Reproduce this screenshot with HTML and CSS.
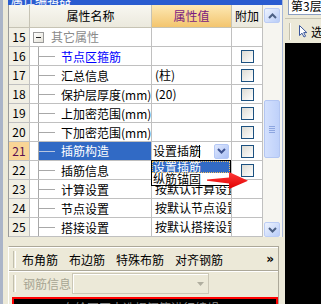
FILE: index.html
```html
<!DOCTYPE html>
<html lang="zh">
<head>
    <meta charset="UTF-8">
    <title>属性编辑器</title>
    <link rel="stylesheet" href="styles.css">
</head>
<body>

<div class="screen">
    <div class="left">
        <div class="frame-edge"></div>
        <div class="main">
            <div class="titlebar"><span>属性编辑器</span></div>

            <div class="grid-area">
                <div class="grid-wrap">
                    <div class="row hdr">
                        <div class="c num"></div>
                        <div class="c name">属性名称</div>
                        <div class="c val">属性值</div>
                        <div class="c att">附加</div>
                    </div>

                    <div class="row">
                        <div class="c num">15</div>
                        <div class="c name group"><span class="expander"><i></i></span><span class="grey">其它属性</span></div>
                        <div class="c val"></div>
                        <div class="c att"></div>
                    </div>
                    <div class="row">
                        <div class="c num">16</div>
                        <div class="c name"><span class="node"><b class="branch"></b><span class="blue">节点区箍筋</span></span></div>
                        <div class="c val"></div>
                        <div class="c att"><span class="chk"></span></div>
                    </div>
                    <div class="row">
                        <div class="c num">17</div>
                        <div class="c name"><span class="node"><b class="branch"></b>汇总信息</span></div>
                        <div class="c val">(柱)</div>
                        <div class="c att"><span class="chk"></span></div>
                    </div>
                    <div class="row">
                        <div class="c num">18</div>
                        <div class="c name"><span class="node"><b class="branch"></b>保护层厚度(mm)</span></div>
                        <div class="c val">(20)</div>
                        <div class="c att"><span class="chk"></span></div>
                    </div>
                    <div class="row">
                        <div class="c num">19</div>
                        <div class="c name"><span class="node"><b class="branch"></b>上加密范围(mm)</span></div>
                        <div class="c val"></div>
                        <div class="c att"><span class="chk"></span></div>
                    </div>
                    <div class="row">
                        <div class="c num">20</div>
                        <div class="c name"><span class="node"><b class="branch"></b>下加密范围(mm)</span></div>
                        <div class="c val"></div>
                        <div class="c att"><span class="chk"></span></div>
                    </div>
                    <div class="row current">
                        <div class="c num">21</div>
                        <div class="c name"><span class="node"><b class="branch"></b>插筋构造</span></div>
                        <div class="c val edit">设置插筋<span class="caret"></span>
                            <span class="combo-btn">
                                <svg width="9" height="6" viewBox="0 0 9 6"><path d="M1 1 L4.5 4.5 L8 1" fill="none" stroke="#3d5290" stroke-width="2"/></svg>
                            </span>
                        </div>
                        <div class="c att"><span class="chk"></span></div>
                    </div>
                    <div class="row">
                        <div class="c num">22</div>
                        <div class="c name"><span class="node"><b class="branch"></b>插筋信息</span></div>
                        <div class="c val"></div>
                        <div class="c att"><span class="chk"></span></div>
                    </div>
                    <div class="row">
                        <div class="c num">23</div>
                        <div class="c name"><span class="node"><b class="branch"></b>计算设置</span></div>
                        <div class="c val">按默认计算设置</div>
                        <div class="c att"></div>
                    </div>
                    <div class="row">
                        <div class="c num">24</div>
                        <div class="c name"><span class="node"><b class="branch"></b>节点设置</span></div>
                        <div class="c val">按默认节点设置</div>
                        <div class="c att"></div>
                    </div>
                    <div class="row">
                        <div class="c num">25</div>
                        <div class="c name"><span class="node"><b class="branch"></b>搭接设置</span></div>
                        <div class="c val">按默认搭接设置</div>
                        <div class="c att"></div>
                    </div>

                    <!-- open dropdown of row 21 -->
                    <div class="droplist">
                        <div class="opt sel">设置插筋</div>
                        <div class="opt">纵筋锚固</div>
                    </div>

                    <svg class="pointer-arrow" width="44" height="22" viewBox="0 0 44 22">
                        <defs>
                            <linearGradient id="ar" x1="0" y1="0" x2="0" y2="1">
                                <stop offset="0" stop-color="#ff3a3a"/>
                                <stop offset="1" stop-color="#e00000"/>
                            </linearGradient>
                        </defs>
                        <polygon points="1,9.6 23,7.4 23,2 42,10.8 23,19 23,13.6 1,10.8" fill="url(#ar)"/>
                    </svg>
                </div>

                <div class="vscroll">
                    <div class="sb-btn up">
                        <svg width="9" height="6" viewBox="0 0 9 6"><path d="M1 5 L4.5 1.5 L8 5" fill="none" stroke="#4d6185" stroke-width="2"/></svg>
                    </div>
                    <div class="sb-thumb"><i></i><i></i><i></i><i></i></div>
                    <div class="sb-btn down">
                        <svg width="9" height="6" viewBox="0 0 9 6"><path d="M1 1 L4.5 4.5 L8 1" fill="none" stroke="#4d6185" stroke-width="2"/></svg>
                    </div>
                </div>
            </div>

            <div class="bottom">
                <div class="panel">
                    <div class="tb tb1">
                        <span class="gripper"></span>
                        <span class="tbtn">布角筋</span>
                        <span class="tbtn">布边筋</span>
                        <span class="tbtn">特殊布筋</span>
                        <span class="tbtn">对齐钢筋</span>
                        <span class="more">»</span>
                    </div>
                    <div class="tb tb2">
                        <span class="gripper"></span>
                        <span class="tlabel">钢筋信息</span>
                        <span class="tcombo">
                            <svg width="7" height="4" viewBox="0 0 7 4"><path d="M0 0 H7 L3.5 4 Z" fill="#b0ae9f"/></svg>
                        </span>
                    </div>
                    <div class="canvas"><span>在绘图区中选择钢筋进行编辑</span></div>
                </div>
            </div>
        </div>
        <div class="sep"><div class="sep-top"></div></div>
    </div>

    <div class="right">
        <div class="floor">第3层</div>
        <div class="tools">
            <span class="gripper"></span>
            <svg class="cursor" width="9" height="13" viewBox="0 0 9 13">
                <path d="M0.5 0.5 L0.5 10.5 L3 8.2 L5 12 L6.6 11.2 L4.7 7.6 L7.8 7.6 Z" fill="#fff" stroke="#39569c" stroke-width="1"/>
            </svg>
            <span class="tool-text">选择</span>
        </div>
        <div class="black"></div>
    </div>
</div>

</body>
</html>
```

FILE: styles.css
```css
body {
    margin: 0;
    background: #000;
    font-family: "Noto Sans CJK SC", "Liberation Sans", sans-serif;
    font-size: 12px;
    color: #000;
}
.screen {
    display: flex;
    width: 321px;
    height: 304px;
    overflow: hidden;
}
.left {
    display: flex;
    width: 285px;
    background: #ece9d8;
}
.frame-edge {
    width: 3px;
    margin-right: 5px;
    background: #aab4c8;
}
.main {
    width: 274px;
    display: flex;
    flex-direction: column;
}
.titlebar {
    height: 5px;
    overflow: hidden;
    background: #2a5cd0;
    color: #fff;
    line-height: 12px;
}
.titlebar span {
    display: block;
    margin-top: -7px;
    padding-left: 3px;
}

/* property grid */
.grid-area {
    display: flex;
    height: 232px;
}
.grid-wrap {
    position: relative;
    width: 255px;
    border-left: 1px solid #9a9a9a;
    box-sizing: border-box;
    background: #fff;
}
.row {
    display: flex;
    height: 19px;
}
.c {
    box-sizing: border-box;
    border-right: 1px solid #c0c0c0;
    border-bottom: 1px solid #c0c0c0;
    line-height: 18px;
    white-space: nowrap;
    overflow: hidden;
}
.num {
    width: 21px;
    text-align: center;
    background: #f1efe4;
}
.name {
    width: 122px;
    display: flex;
    padding-left: 8px;
}
.val {
    width: 80px;
    padding-left: 3px;
}
.att {
    width: 31px;
    display: flex;
    align-items: center;
    justify-content: center;
}
.hdr {
    height: 23px;
}
.hdr .c {
    line-height: 22px;
    background: linear-gradient(#f8f7f1, #ebe9dd);
    border-color: #c6c3b4;
}
.hdr .name {
    justify-content: center;
    padding-left: 0;
}
.hdr .val {
    text-align: center;
    padding-left: 0;
    color: #7a1a80;
    background: linear-gradient(#fde8b4, #f3c56e);
}
.hdr .att {
    display: block;
    text-align: center;
}

.group {
    padding-left: 3px;
    align-items: center;
}
.expander {
    width: 9px;
    height: 9px;
    border: 1px solid #9a9a9a;
    background: linear-gradient(135deg, #fff, #e4e2d8);
    display: flex;
    align-items: center;
    justify-content: center;
    margin-right: 7px;
}
.expander i {
    width: 5px;
    height: 1px;
    background: #222;
}
.grey {
    color: #8a8a8a;
}
.blue {
    color: #0000ff;
}
.node {
    display: flex;
    align-items: center;
    flex: 1;
    height: 19px;
    margin-bottom: -1px;
    border-left: 1px solid #a8a8a8;
}
.branch {
    width: 16px;
    height: 1px;
    margin-right: 6px;
    background: #a8a8a8;
}
.current .num {
    background: #f9d596;
    color: #5a1050;
}
.current .node {
    background: #316ac5;
    color: #fff;
    height: 18px;
    margin-bottom: 0;
}
.current .branch {
    background: #b8c6e0;
}
.edit {
    display: flex;
    align-items: center;
    padding-left: 1px;
}
.caret {
    width: 1px;
    height: 13px;
    margin-left: -2px;
    background: #000;
}
.combo-btn {
    margin-left: auto;
    margin-right: 2px;
    width: 13px;
    height: 13px;
    border: 1px solid #b4c8f6;
    border-radius: 2px;
    background: linear-gradient(135deg, #dfe8fd, #aac0f6);
    display: flex;
    align-items: center;
    justify-content: center;
}
.chk {
    width: 11px;
    height: 11px;
    border: 1px solid #1c5180;
    background: linear-gradient(135deg, #dcdbd4, #fff);
}

.droplist {
    position: absolute;
    left: 142px;
    top: 155px;
    width: 80px;
    border: 1px solid #000;
    background: #fff;
    box-sizing: border-box;
}
.opt {
    height: 12px;
    line-height: 12px;
    padding-left: 1px;
    white-space: nowrap;
}
.opt.sel {
    background: #316ac5;
    color: #fff;
    outline: 1px dotted #f0c060;
    outline-offset: -1px;
}
.pointer-arrow {
    position: absolute;
    left: 197px;
    top: 165px;
}

/* vertical scrollbar */
.vscroll {
    width: 19px;
    background: #f6f5f0;
    display: flex;
    flex-direction: column;
    padding-left: 1px;
    box-sizing: border-box;
}
.sb-btn {
    width: 16px;
    height: 15px;
    box-sizing: border-box;
    border: 1px solid #bccdf5;
    border-radius: 2px;
    background: linear-gradient(135deg, #eef3fe, #b9cdf8);
    display: flex;
    align-items: center;
    justify-content: center;
}
.up {
    margin-top: 3px;
}
.down {
    margin-top: auto;
}
.sb-thumb {
    width: 16px;
    height: 58px;
    margin-top: 77px;
    box-sizing: border-box;
    border: 1px solid #b3c6f2;
    border-radius: 2px;
    background: linear-gradient(90deg, #d3e0fd, #bfd1fa);
    display: flex;
    flex-direction: column;
    align-items: center;
    justify-content: center;
    gap: 1px;
}
.sb-thumb i {
    width: 6px;
    height: 1px;
    background: #8da6e0;
}

/* bottom rebar panel */
.bottom {
    height: 67px;
    padding-top: 9px;
    box-sizing: border-box;
}
.panel {
    width: 271px;
    height: 100%;
    box-sizing: border-box;
    border-top: 1px solid #aca899;
    border-right: 1px solid #aca899;
    border-left: 1px solid #fff;
}
.tb {
    display: flex;
    align-items: center;
    box-sizing: border-box;
}
.tb1 {
    height: 24px;
    border-top: 1px solid #fff;
    border-bottom: 1px solid #aca899;
}
.tb2 {
    height: 24px;
    border-top: 1px solid #fff;
}
.gripper {
    width: 1px;
    height: 17px;
    margin-left: 4px;
    border-left: 1px solid #c2bfad;
    border-right: 1px solid #fff;
}
.tbtn {
    margin-left: 6px;
    margin-right: 3px;
}
.tbtn + .tbtn {
    margin-left: 8px;
}
.more {
    margin-left: auto;
    margin-right: 5px;
    font-family: "DejaVu Sans", sans-serif;
    font-weight: bold;
    font-size: 12px;
    letter-spacing: -1px;
}
.tlabel {
    margin-left: 7px;
    color: #a7a593;
}
.tcombo {
    width: 137px;
    height: 21px;
    margin-left: 1px;
    box-sizing: border-box;
    border: 1px solid #cbc7b6;
    box-shadow: inset 1px 1px #fff;
    display: flex;
    align-items: center;
    justify-content: flex-end;
    padding-right: 4px;
}
.canvas {
    margin: 2px 0 0 3px;
    width: 266px;
    height: 40px;
    box-sizing: border-box;
    border: 2px solid #ff0000;
    background: #000;
    color: #8a8a8a;
    padding: 2px 0 0 49px;
    line-height: 14px;
}

.sep {
    width: 3px;
    background: #ece9d8;
}
.sep-top {
    height: 237px;
    border-left: 1px solid #a9b8d8;
}

/* right side */
.right {
    width: 36px;
    display: flex;
    flex-direction: column;
    background: #ece9d8;
}
.floor {
    height: 14px;
    margin-left: 3px;
    padding-left: 2px;
    background: #fff;
    border-left: 1px solid #8c9fc2;
    border-bottom: 1px solid #8c9fc2;
    line-height: 12px;
    white-space: nowrap;
    overflow: hidden;
}
.tools {
    height: 24px;
    margin-top: 3px;
    border-top: 1px solid #c8c5b4;
    display: flex;
    align-items: center;
    white-space: nowrap;
}
.tools .gripper {
    margin-left: 4px;
}
.cursor {
    margin-left: 8px;
    flex-shrink: 0;
}
.tool-text {
    margin-left: 3px;
}
.black {
    flex: 1;
    background: #000;
}
```
